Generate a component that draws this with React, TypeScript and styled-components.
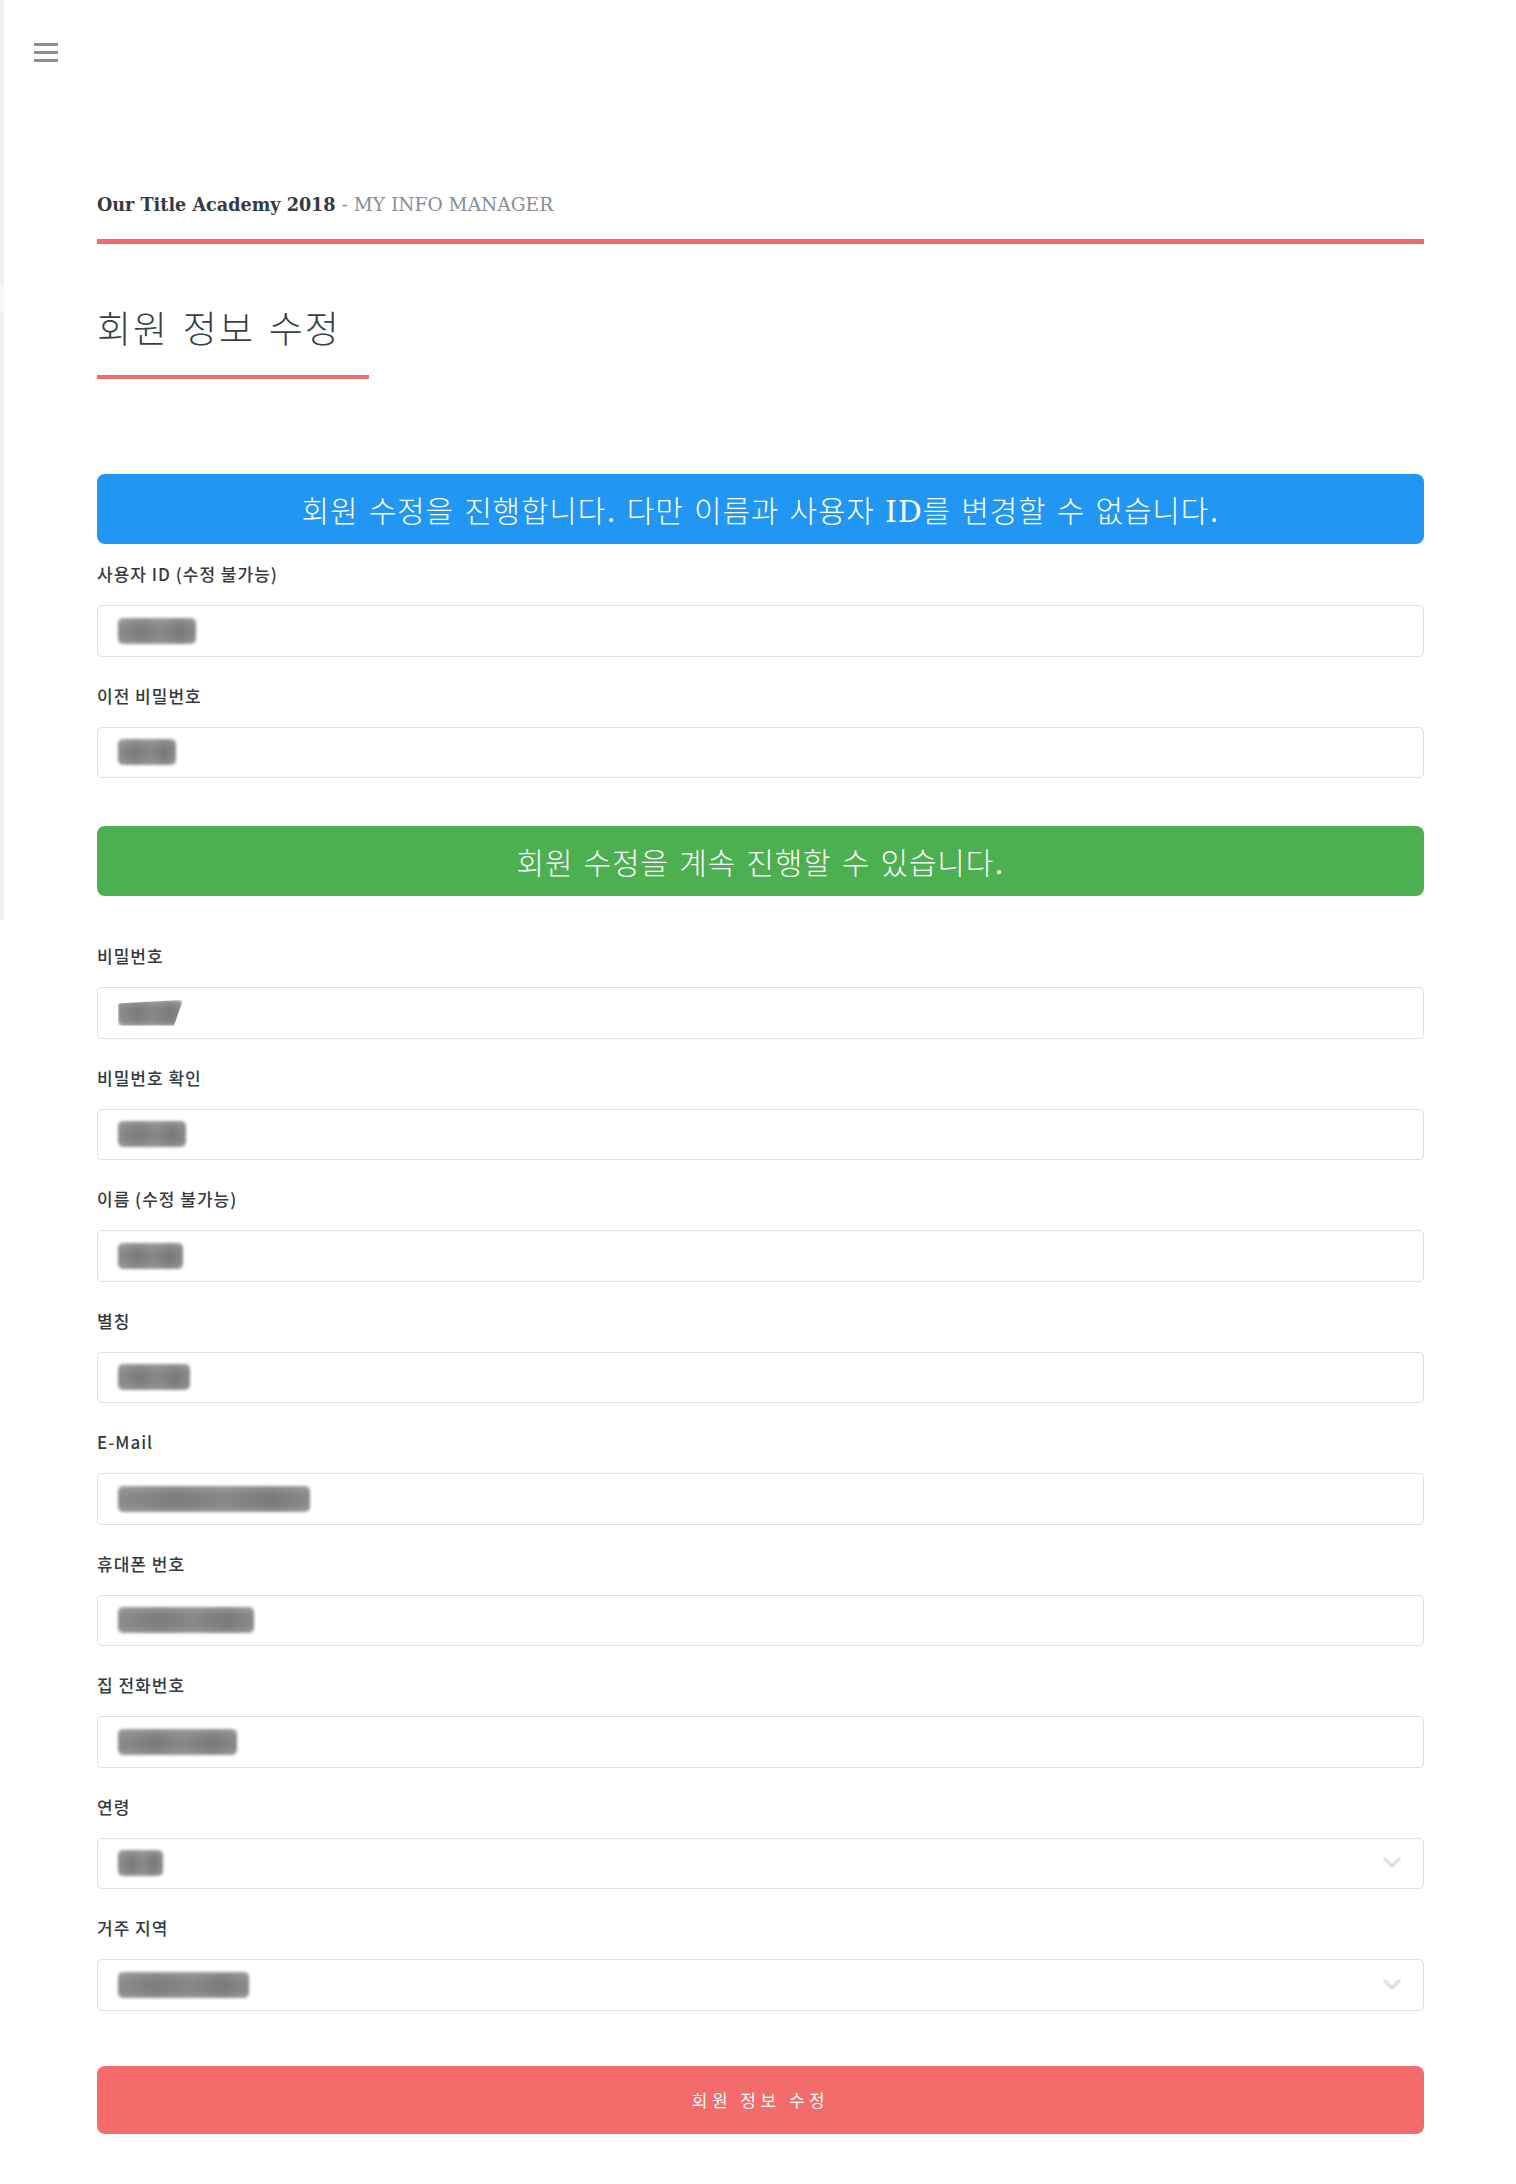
import React from "react";
import styled, { createGlobalStyle } from "styled-components";

const GlobalStyle = createGlobalStyle`
  html, body { margin: 0; padding: 0; background: #ffffff; }
  body { font-family: "Noto Sans CJK KR", "Noto Sans", sans-serif; color: #343a40; }
  *, *::before, *::after { box-sizing: border-box; }
`;

const Page = styled.div`
  display: flex;
  width: 1516px;
  min-height: 2184px;
`;

const SideRail = styled.div`
  flex: 0 0 4px;
  background: linear-gradient(
    to bottom,
    #eef0f3 0px,
    #eef0f3 285px,
    #f7f8f9 285px,
    #f7f8f9 313px,
    #eef0f3 313px,
    #eef0f3 920px,
    #ffffff 920px
  );
`;

const Main = styled.main`
  flex: 1;
  display: flex;
  flex-direction: column;
  padding-bottom: 50px;
`;

const TopBar = styled.div`
  display: flex;
  padding: 43px 0 0 30px;
`;

const MenuButton = styled.button`
  display: flex;
  flex-direction: column;
  gap: 5px;
  width: 24px;
  padding: 0;
  border: none;
  background: transparent;
  cursor: pointer;
`;

const MenuBar = styled.span`
  display: block;
  width: 24px;
  height: 3px;
  background: #868e96;
`;

const Container = styled.div`
  display: flex;
  flex-direction: column;
  padding: 0 92px 0 93px;
`;

const Header = styled.header`
  margin-top: 130px;
  padding-bottom: 21px;
  border-bottom: 5px solid #f46b6b;
  font-family: "DejaVu Serif", "Noto Sans CJK KR", serif;
  line-height: 25px;
  white-space: nowrap;
`;

const Brand = styled.strong`
  font-size: 17.6px;
  font-weight: 700;
  color: #343a40;
`;

const SubBrand = styled.span`
  font-size: 18.6px;
  font-weight: 400;
  color: #868e96;
`;

const Heading = styled.h2`
  width: 272px;
  margin: 65px 0 0;
  padding-bottom: 22px;
  border-bottom: 4px solid #f46b6b;
  font-family: "DejaVu Serif", "Noto Sans CJK KR", serif;
  font-size: 37px;
  line-height: 44px;
  font-weight: 300;
  letter-spacing: 2px;
  color: #3a3f44;
  white-space: nowrap;
`;

const Alert = styled.div<{ $tone: "info" | "success"; $top: number; $bottom: number }>`
  display: flex;
  align-items: center;
  justify-content: center;
  height: 70px;
  margin-top: ${(p) => p.$top}px;
  margin-bottom: ${(p) => p.$bottom}px;
  border-radius: 8px;
  background: ${(p) => (p.$tone === "info" ? "#2196f3" : "#4caf50")};
  color: #ffffff;
  font-family: "DejaVu Serif", "Noto Sans CJK KR", serif;
  font-size: 30px;
  font-weight: 300;
  letter-spacing: 0.8px;
  white-space: nowrap;
`;

const FieldGroup = styled.div`
  display: flex;
  flex-direction: column;
  margin-bottom: 27px;
  &:last-of-type {
    margin-bottom: 0;
  }
`;

const Label = styled.label`
  display: block;
  margin-bottom: 19px;
  font-family: "Noto Sans CJK KR", "Noto Sans", sans-serif;
  font-size: 17px;
  line-height: 24px;
  font-weight: 500;
  letter-spacing: 1px;
  color: #343a40;
`;

const InputBox = styled.div`
  display: flex;
  align-items: center;
  justify-content: space-between;
  height: 51.5px;
  padding: 0 22px 0 20px;
  border: 1px solid #dcdfe3;
  border-radius: 5px;
  background: #ffffff;
`;

const Redacted = styled.span<{ $w: number; $slant?: boolean }>`
  display: block;
  width: ${(p) => p.$w}px;
  height: 26px;
  border-radius: 5px;
  background:
    linear-gradient(180deg, rgba(255,255,255,0.18) 0%, transparent 35%, transparent 70%, rgba(255,255,255,0.15) 100%),
    linear-gradient(90deg, #8c8c8c 0%, #7c7c7c 30%, #888888 55%, #7a7a7a 80%, #8a8a8a 100%);
  filter: blur(1.4px);
  clip-path: ${(p) => (p.$slant ? "polygon(0 14%, 100% 0, 86% 100%, 0 100%)" : "none")};
`;

const Chevron = styled.svg`
  flex: 0 0 auto;
  width: 18px;
  height: 12px;
`;

const SubmitButton = styled.button`
  height: 68px;
  margin-top: 55px;
  border: none;
  border-radius: 8px;
  background: #f46b6b;
  color: #ffffff;
  font-family: "Noto Sans CJK KR", sans-serif;
  font-size: 17px;
  letter-spacing: 4.5px;
  cursor: pointer;
`;

type Field = { label: string; w: number; slant?: boolean; select?: boolean };

const firstFields: Field[] = [
  { label: "사용자 ID (수정 불가능)", w: 78 },
  { label: "이전 비밀번호", w: 58 },
];

const secondFields: Field[] = [
  { label: "비밀번호", w: 65, slant: true },
  { label: "비밀번호 확인", w: 68 },
  { label: "이름 (수정 불가능)", w: 65 },
  { label: "별칭", w: 72 },
  { label: "E-Mail", w: 192 },
  { label: "휴대폰 번호", w: 136 },
  { label: "집 전화번호", w: 119 },
  { label: "연령", w: 45, select: true },
  { label: "거주 지역", w: 131, select: true },
];

function FieldRow({ f }: { f: Field }) {
  return (
    <FieldGroup>
      <Label>{f.label}</Label>
      <InputBox>
        <Redacted $w={f.w} $slant={f.slant} />
        {f.select && (
          <Chevron viewBox="0 0 18 12">
            <polyline
              points="2,2 9,9 16,2"
              fill="none"
              stroke="#dee2e6"
              strokeWidth="3.5"
              strokeLinecap="round"
              strokeLinejoin="round"
            />
          </Chevron>
        )}
      </InputBox>
    </FieldGroup>
  );
}

const Section = styled.div`
  display: flex;
  flex-direction: column;
`;

export default function App() {
  return (
    <>
      <GlobalStyle />
      <Page>
        <SideRail />
        <Main>
          <TopBar>
            <MenuButton aria-label="menu">
              <MenuBar />
              <MenuBar />
              <MenuBar />
            </MenuButton>
          </TopBar>
          <Container>
            <Header>
              <Brand>Our Title Academy 2018</Brand>
              <SubBrand> - MY INFO MANAGER</SubBrand>
            </Header>
            <Heading>회원 정보 수정</Heading>
            <Alert $tone="info" $top={95} $bottom={18}>
              회원 수정을 진행합니다. 다만 이름과 사용자 ID를 변경할 수 없습니다.
            </Alert>
            <Section>
              {firstFields.map((f) => (
                <FieldRow key={f.label} f={f} />
              ))}
            </Section>
            <Alert $tone="success" $top={48} $bottom={48}>
              회원 수정을 계속 진행할 수 있습니다.
            </Alert>
            <Section>
              {secondFields.map((f) => (
                <FieldRow key={f.label} f={f} />
              ))}
            </Section>
            <SubmitButton type="button">회원 정보 수정</SubmitButton>
          </Container>
        </Main>
      </Page>
    </>
  );
}
